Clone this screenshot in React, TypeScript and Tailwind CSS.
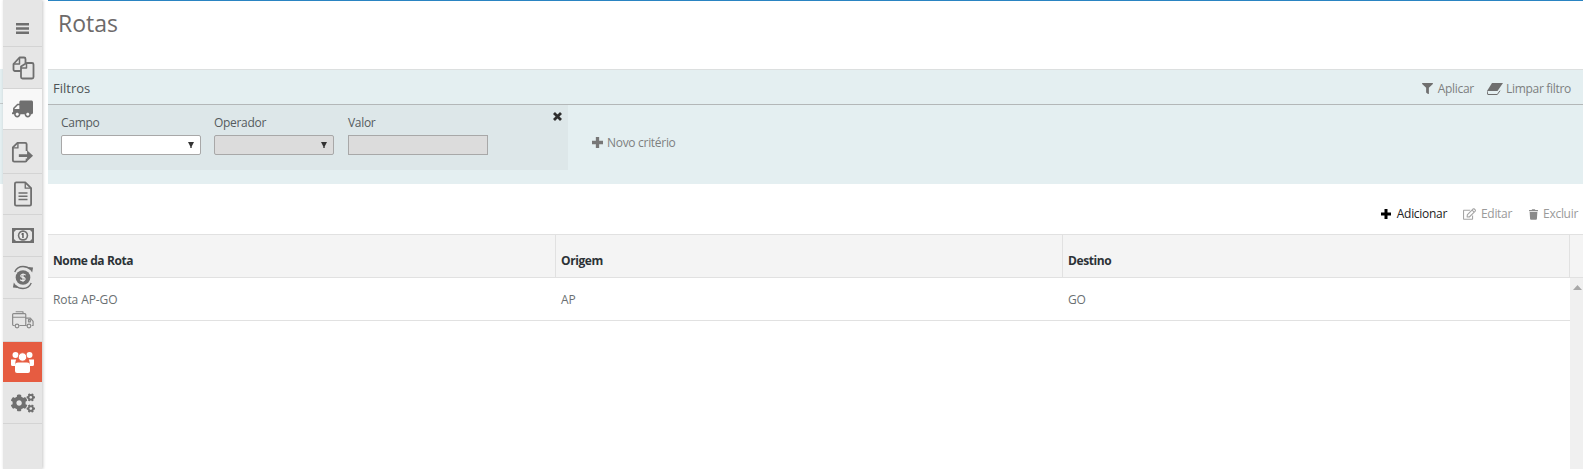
import { FaTruck, FaFilter, FaRegEdit, FaTrash, FaCogs } from "react-icons/fa";
import type { ReactNode } from "react";

function MenuIcon() {
  return (
    <svg className="h-[11px] w-[13px]" viewBox="0 0 13 11" fill="#6f6f6f">
      <path d="M0 0h13v2.500H0ZM0 4.250h13v2.500H0ZM0 8.500h13V11H0Z" />
    </svg>
  );
}

function CopyIcon() {
  return (
    <svg className="h-[24px] w-[24px]" viewBox="0 0 24 24" fill="none" stroke="#6f6f6f" strokeWidth={1.800} strokeLinejoin="round">
      <path d="M10 15H3.500a1.500 1.500 0 0 1-1-1.500V8l6-6.500h4.500a1.500 1.500 0 0 1 1.500 1.500V7" />
      <path d="M8.500 2v6H2.500" strokeWidth={1.500} />
      <path d="M10 10.500 15.500 7H21a1.500 1.500 0 0 1 1.500 1.500V21a1.500 1.500 0 0 1-1.500 1.500H11.500A1.500 1.500 0 0 1 10 21Z" />
      <path d="M15.500 7v5H10" strokeWidth={1.500} />
    </svg>
  );
}

function ExportIcon() {
  return (
    <svg className="h-[22px] w-[23px]" viewBox="0 0 24 24" fill="none" stroke="#6f6f6f" strokeWidth={2} strokeLinejoin="round">
      <path d="M13 2H6.500L1.500 7V21a1.500 1.500 0 0 0 1.500 1.500h12a1.500 1.500 0 0 0 1.500-1.500v-2M16.500 11V3.500A1.500 1.500 0 0 0 15 2h-2" />
      <path d="M7 1.500V7.500H1.500" strokeWidth={1.500} />
      <path d="M8 14.500h9V10l6.500 6-6.500 6v-4.500H8Z" fill="#6f6f6f" stroke="none" />
    </svg>
  );
}

function DocIcon() {
  return (
    <svg className="h-[26px] w-[18px]" viewBox="0 0 20 28" fill="none" stroke="#6f6f6f" strokeWidth={2} strokeLinejoin="round">
      <path d="M12.500 1H2.500A1.500 1.500 0 0 0 1 2.500v23A1.500 1.500 0 0 0 2.500 27h15a1.500 1.500 0 0 0 1.500-1.500V7.500Z" />
      <path d="M12.500 1v6.500H19" strokeWidth={1.500} />
      <path d="M5 13h10M5 16.500h10M5 20h10" strokeWidth={1.700} />
    </svg>
  );
}

function MoneyIcon() {
  return (
    <svg className="h-[15px] w-[22px]" viewBox="0 0 22 15">
      <path fillRule="evenodd" fill="#6f6f6f" d="M0 0h22v15H0ZM4 2 2 4v7l2 2h14l2-2V4l-2-2Z" />
      <circle cx="11" cy="7.500" r="5.200" fill="#6f6f6f" />
      <circle cx="11" cy="7.500" r="3.600" fill="#ececec" />
      <path d="M10.200 5h1.500v5h-1.500ZM9 6.200 10.200 5v1.700Z" fill="#5e5e5e" />
    </svg>
  );
}

function RefundIcon() {
  return (
    <svg className="h-[27px] w-[22px]" viewBox="0 0 24 28" fill="none">
      <circle cx="12" cy="14" r="8" fill="#6f6f6f" />
      <path d="M3 8C5 3.500 8 2 12 2c3 0 6 1 8 3" stroke="#6f6f6f" strokeWidth={1.500} />
      <path d="M21 20c-2 4.500-5 6-9 6-3 0-6-1-8-3" stroke="#6f6f6f" strokeWidth={1.500} />
      <path d="m17.500 2.500 5.500 .5-1 5.500ZM6.500 25.500 1 25l1-5.500Z" fill="#6f6f6f" />
      <path d="M14.800 11.500c-.6-1-3-1.500-4.500-.6-1.200.8-.8 2.300.6 2.700l2.200.6c1.400.5 1.600 2 .4 2.800-1.500.9-3.900.4-4.500-.7M12 9.500v9" stroke="#ececec" strokeWidth={1.300} />
    </svg>
  );
}

function DeliveryIcon() {
  return (
    <svg className="h-[20px] w-[22px]" viewBox="0 0 24 20" fill="none" stroke="#8a8a8a" strokeWidth={1.300} strokeLinejoin="round">
      <path d="M3 16H1.500A1 1 0 0 1 .7 15V4a1 1 0 0 1 1-1H14a1 1 0 0 1 1 1v12H8" />
      <path d="M4 1h8v2M1 7h14" />
      <path d="M15 8h5l3 3.500V16h-1.500M15 16h1" />
      <path d="M18 9.500h2v2.500h-2Z" />
      <circle cx="5.500" cy="16.500" r="2" />
      <circle cx="18.500" cy="16.500" r="2" />
    </svg>
  );
}

function UsersIcon() {
  return (
    <svg className="h-[22px] w-[23px]" viewBox="0 0 23 22" fill="#fff">
      <circle cx="4.500" cy="4" r="3" />
      <circle cx="18.500" cy="4" r="3" />
      <path d="M0 8.500h5.200c-1 2-1 4 -.7 6.500H1.500A1.500 1.500 0 0 1 0 13.500ZM23 8.500h-5.200c1 2 1 4 .7 6.500h3A1.500 1.500 0 0 0 23 13.500Z" />
      <circle cx="11.500" cy="6" r="4.200" stroke="#e65c41" strokeWidth={0.800} />
      <path d="M7 11.500h9a3 3 0 0 1 3 3V20a2 2 0 0 1-2 2H6a2 2 0 0 1-2-2v-5.500a3 3 0 0 1 3-3Z" />
    </svg>
  );
}

function PlusIcon({ className }: { className: string }) {
  return (
    <svg className={className} viewBox="0 0 12 12" fill="currentColor">
      <path d="M4.200 0h3.600v4.200H12v3.600H7.800V12H4.200V7.800H0V4.200h4.200Z" />
    </svg>
  );
}

function EraserIcon() {
  return (
    <svg className="mr-[3px] ml-[13px] h-[12px] w-[16px]" viewBox="0 0 16 12">
      <path d="M5 0h11L10.500 8H0Z" fill="#6f6f6f" />
      <path d="M.8 11.500h9.500l2.700-3.800M.8 11.500 0 8" fill="none" stroke="#6f6f6f" strokeWidth={1} />
    </svg>
  );
}

function CloseIcon() {
  return (
    <svg className="absolute top-[7px] right-[6px] h-[9px] w-[9px]" viewBox="0 0 9 9" stroke="#2e2e2e" strokeWidth={2.800}>
      <path d="M1 1l7 7M8 1 1 8" />
    </svg>
  );
}

function SelectArrow() {
  return (
    <svg className="h-[6px] w-[6px]" viewBox="0 0 6 6" fill="#333">
      <path d="M0 0h6L3.700 4.500V6H2.300V4.500Z" />
    </svg>
  );
}

const sidebarItems: { key: string; icon: ReactNode; active?: boolean; current?: boolean; height: string }[] = [
  { key: "menu", icon: <MenuIcon />, height: "h-[47px] pt-[11px]" },
  { key: "docs", icon: <CopyIcon />, height: "h-[42px]" },
  { key: "truck", icon: <FaTruck className="h-[18px] w-[21px] -scale-x-100 text-[#6f6f6f]" />, current: true, height: "h-[41px]" },
  { key: "export", icon: <ExportIcon />, height: "h-[44px]" },
  { key: "doc", icon: <DocIcon />, height: "h-[41px]" },
  { key: "money", icon: <MoneyIcon />, height: "h-[42px]" },
  { key: "refund", icon: <RefundIcon />, height: "h-[42px]" },
  { key: "delivery", icon: <DeliveryIcon />, height: "h-[43px]" },
  { key: "users", icon: <UsersIcon />, active: true, height: "h-[40px]" },
  { key: "config", icon: <FaCogs className="h-[22px] w-[24px] text-[#6f6f6f]" />, height: "h-[42px]" },
];

function Sidebar() {
  return (
    <div className="flex h-full w-[48px] shrink-0">
      <div className="w-[3px] pt-[69px]">
        <div className="h-[115px] bg-[#e4eff1]">
          <div className="h-[35px] border-b border-[#c4c9ca]" />
        </div>
      </div>
      <nav className="h-full w-[39px] bg-[#e6e6e6] shadow-[1px_0_3px_rgba(0,0,0,0.22)]">
        {sidebarItems.map((item) => (
          <div
            key={item.key}
            className={`flex items-center justify-center ${item.height} ${
              item.active
                ? "bg-[#e65c41]"
                : item.current
                  ? "border-b border-[#d4d4d4] bg-[#f8f8f8]"
                  : "border-b border-[#d4d4d4]"
            }`}
          >
            {item.icon}
          </div>
        ))}
      </nav>
    </div>
  );
}

function FilterSelect({ label, width, disabled }: { label: string; width: string; disabled?: boolean }) {
  return (
    <div className={width}>
      <div className="mb-[3px] h-[20px] text-[12px] leading-[22px] tracking-[-0.3px] text-[#555b5e]">{label}</div>
      <div
        className={`flex h-[20px] items-center justify-end rounded-[2px] border border-[#a8a8a8] pr-[6px] ${
          disabled ? "bg-[#dcdcdc]" : "bg-white"
        }`}
      >
        <SelectArrow />
      </div>
    </div>
  );
}

function FiltersPanel() {
  return (
    <section className="mt-[40px] h-[115px] border-t border-[#dcdfdf] bg-[#e4eff1]">
      <div className="flex h-[35px] items-center justify-between border-b border-[#b3b7b8] pt-[3px] pr-[12px] pl-[5px]">
        <span className="text-[13px] text-[#4c5356]">Filtros</span>
        <div className="flex items-center text-[12px] tracking-[-0.3px] text-[#7d8080]">
          <FaFilter className="mr-[5px] h-[11px] w-[11px] text-[#6f6f6f]" />
          <span>Aplicar</span>
          <EraserIcon />
          <span>Limpar filtro</span>
        </div>
      </div>
      <div className="flex items-start">
        <div className="relative flex h-[65px] w-[520px] gap-[13px] bg-[#dde7e9] pt-[7px] pl-[13px]">
          <FilterSelect label="Campo" width="w-[140px]" />
          <FilterSelect label="Operador" width="w-[120px]" disabled />
          <div className="ml-[1px] w-[140px]">
            <div className="mb-[3px] h-[20px] text-[12px] leading-[22px] tracking-[-0.3px] text-[#555b5e]">Valor</div>
            <div className="h-[20px] border border-[#a8a8a8] bg-[#dcdcdc]" />
          </div>
          <CloseIcon />
        </div>
        <div className="ml-[24px] flex h-[75px] items-center text-[12px] tracking-[-0.3px] text-[#7d8080]">
          <PlusIcon className="mr-[4px] h-[11px] w-[11px] text-[#777]" />
          <span>Novo critério</span>
        </div>
      </div>
    </section>
  );
}

function Toolbar() {
  return (
    <div className="flex h-[50px] items-center justify-end pt-[10px] pr-[5px] text-[12px] tracking-[-0.3px]">
      <PlusIcon className="mr-[6px] h-[10px] w-[10px] text-black" />
      <span className="text-[#222]">Adicionar</span>
      <FaRegEdit className="mr-[5px] ml-[16px] h-[12px] w-[13px] text-[#a5a5a5]" />
      <span className="text-[#9a9a9a]">Editar</span>
      <FaTrash className="mr-[5px] ml-[17px] h-[11px] w-[9px] text-[#8a8a8a]" />
      <span className="text-[#9a9a9a]">Excluir</span>
    </div>
  );
}

const columns = ["Nome da Rota", "Origem", "Destino"];
const rows = [["Rota AP-GO", "AP", "GO"]];

function RoutesTable() {
  return (
    <div className="flex min-h-0 flex-1 flex-col">
      <div className="flex h-[44px] border-y border-[#e1e1e1] bg-[#f4f4f4]">
        {columns.map((col) => (
          <div
            key={col}
            className="flex w-[507px] items-center border-r border-[#e1e1e1] pt-[10px] pl-[5px] text-[12px] font-bold tracking-[-0.4px] text-[#2c3236] first:w-[508px]"
          >
            {col}
          </div>
        ))}
      </div>
      <div className="flex min-h-0 flex-1">
        <div className="flex-1">
          {rows.map((row) => (
            <div key={row[0]} className="flex h-[43px] border-b border-[#e1e1e1]">
              {row.map((cell) => (
                <div
                  key={cell}
                  className="flex w-[507px] items-center pt-[2px] pl-[5px] text-[12px] tracking-[-0.1px] text-[#6a6f72] first:w-[508px]"
                >
                  {cell}
                </div>
              ))}
            </div>
          ))}
        </div>
        <div className="flex w-[14px] shrink-0 justify-center bg-[#f0f0f0] pt-[7px]">
          <svg className="h-[5px] w-[9px]" viewBox="0 0 9 5" fill="#a8a8a8">
            <path d="M4.500 0 9 5H0Z" />
          </svg>
        </div>
      </div>
    </div>
  );
}

export default function App() {
  return (
    <div className="flex h-[469px] w-[1583px] overflow-hidden bg-white font-['Open_Sans','Noto_Sans',sans-serif]">
      <Sidebar />
      <main className="flex min-w-0 flex-1 flex-col border-t border-[#2a84c2]">
        <h1 className="h-[28px] pt-[7px] pl-[10px] text-[23px] leading-[30px] text-[#6d6a6a]">Rotas</h1>
        <FiltersPanel />
        <Toolbar />
        <RoutesTable />
      </main>
    </div>
  );
}
